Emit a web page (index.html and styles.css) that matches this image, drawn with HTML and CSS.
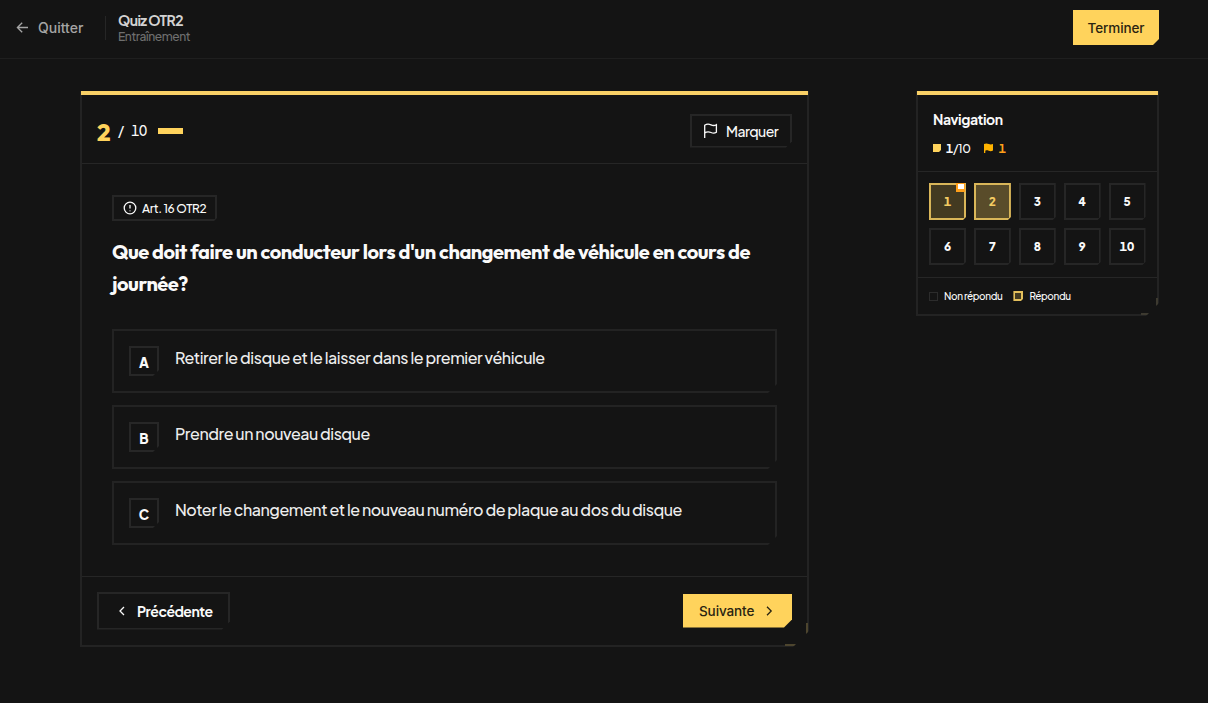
FILE: index.html
```html
<!DOCTYPE html>
<html lang="fr">
<head>
    <meta charset="UTF-8">
    <meta name="viewport" content="width=device-width, initial-scale=1.0">
    <title>Quiz OTR2</title>
    <link rel="stylesheet" href="styles.css">
</head>
<body>

    <header class="topbar">
        <a class="quit" href="#">
            <svg width="13" height="13" viewBox="0 0 13 13"><path d="M12 6.5H1.5M6.2 1.7L1.4 6.5l4.8 4.8"/></svg>
            <span>Quitter</span>
        </a>
        <div class="quiz-info">
            <h1 class="quiz-title"><span>Quiz OTR2</span></h1>
            <p class="quiz-mode"><span>Entraînement</span></p>
        </div>
        <button class="btn-finish"><span>Terminer</span></button>
    </header>

    <main class="layout">
        <section class="card">
            <div class="card-head">
                <span class="current">2</span>
                <span class="slash">/</span>
                <span class="total">10</span>
                <span class="progress"></span>
                <button class="btn-mark">
                    <svg width="15" height="16" viewBox="0 0 15 16"><path d="M1.7 15V2.2C4.5.4 6.500 1.2 8 1.900c2 .9 3.600.9 5.400-.2v7.600c-1.800 1.100-3.400 1.100-5.400.2-1.500-.7-3.500-1.400-6.300.4"/></svg>
                    <span>Marquer</span>
                </button>
            </div>

            <div class="card-body">
                <div class="article">
                    <svg width="14" height="14" viewBox="0 0 14 14"><circle cx="7" cy="7" r="5.8"/><path d="M7 4v3.4M7 9.4v.9"/></svg>
                    <span>Art. 16 OTR2</span>
                </div>
                <h2 class="question">Que doit faire un conducteur lors d'un changement de véhicule en cours de journée?</h2>

                <div class="options">
                    <div class="option">
                        <span class="letter">A</span>
                        <span class="answer">Retirer le disque et le laisser dans le premier véhicule</span>
                    </div>
                    <div class="option">
                        <span class="letter">B</span>
                        <span class="answer">Prendre un nouveau disque</span>
                    </div>
                    <div class="option">
                        <span class="letter">C</span>
                        <span class="answer">Noter le changement et le nouveau numéro de plaque au dos du disque</span>
                    </div>
                </div>
            </div>

            <div class="card-foot">
                <button class="btn-prev">
                    <svg width="8" height="12" viewBox="0 0 8 12"><path d="M6 2L2 6l4 4"/></svg>
                    <span>Précédente</span>
                </button>
                <button class="btn-next">
                    <span>Suivante</span>
                    <svg width="8" height="12" viewBox="0 0 8 12"><path d="M2 1.7L6.2 6 2 10.3"/></svg>
                </button>
            </div>
        </section>

        <aside class="nav-card">
            <div class="nav-head">
                <h3 class="nav-title"><span>Navigation</span></h3>
                <div class="stats">
                    <span class="dot"></span>
                    <span class="answered"><b>1</b>/10</span>
                    <svg class="flag" width="11" height="11" viewBox="0 0 11 11"><path d="M1 1c2-1 3.300-.6 4.800 0 1.400.6 2.700.6 4.200 0v6.600c-1.500.8-2.900.8-4.300.2-1.400-.6-2.300-.6-3.400 0V10H1z"/></svg>
                    <span class="flagged">1</span>
                </div>
            </div>

            <div class="grid">
                <button class="num done">1<i class="marker"></i></button>
                <button class="num done active">2</button>
                <button class="num">3</button>
                <button class="num">4</button>
                <button class="num">5</button>
                <button class="num">6</button>
                <button class="num">7</button>
                <button class="num">8</button>
                <button class="num">9</button>
                <button class="num">10</button>
            </div>

            <div class="legend">
                <span class="box"></span>
                <span class="label">Non répondu</span>
                <span class="box box-done"></span>
                <span class="label">Répondu</span>
            </div>
        </aside>
    </main>

</body>
</html>
```

FILE: styles.css
```css
* {
    box-sizing: border-box;
}

body {
    margin: 0;
    height: 703px;
    overflow: hidden;
    background-color: #141414;
    color: #fafafa;
    font-family: "Plus Jakarta Sans", Inter, sans-serif;
}

h1, h2, h3, p {
    margin: 0;
}

button {
    font-family: inherit;
    color: inherit;
    background: none;
    padding: 0;
    border: none;
    display: flex;
    align-items: center;
    cursor: pointer;
}

svg {
    display: block;
    flex: none;
    fill: none;
    stroke: currentColor;
    stroke-width: 1.3;
}

span {
    white-space: nowrap;
}

/* Top bar */
.topbar {
    height: 59px;
    border-bottom: 1px solid #1f1f1f;
    display: flex;
    align-items: center;
    padding: 0 49px 3px 16px;
}

.quit {
    display: flex;
    align-items: center;
    gap: 9px;
    width: 90px;
    height: 24px;
    border-right: 1px solid #262626;
    color: #a5a5a5;
    font-family: Inter, sans-serif;
    font-size: 14px;
    font-weight: 500;
    text-decoration: none;
}

.quiz-info {
    padding-left: 12px;
}

.quiz-title {
    font-size: 14px;
    line-height: 17px;
    font-weight: 700;
    letter-spacing: -0.6px;
    color: #d2d2d2;
}

.quiz-mode {
    font-size: 12px;
    line-height: 15px;
    font-weight: 500;
    letter-spacing: -0.4px;
    color: #6f6f6f;
}

.btn-finish {
    margin-left: auto;
    width: 86px;
    height: 35px;
    justify-content: center;
    background-color: #ffd35c;
    color: #2a2411;
    font-family: Inter, sans-serif;
    font-size: 13.5px;
    font-weight: 500;
    letter-spacing: -0.1px;
    clip-path: polygon(0 0, 100% 0, 100% calc(100% - 6px), calc(100% - 6px) 100%, 0 100%);
}

/* Columns */
.layout {
    display: flex;
    align-items: flex-start;
    justify-content: space-between;
    padding: 32px 49px 0 80px;
}

.card,
.nav-card {
    position: relative;
    border: 2px solid #232323;
    border-top: none;
    padding-top: 4px;
}

.card::before,
.nav-card::before {
    content: "";
    position: absolute;
    top: 0;
    left: -1px;
    right: -1px;
    height: 4px;
    background-color: #f9d066;
}

/* accent where the border meets the cut corner */
.card::after,
.nav-card::after {
    content: "";
    position: absolute;
    right: -1px;
    bottom: -1px;
    width: 21px;
    height: 21px;
    border: 2px solid #4d452e;
    border-top: none;
    border-left: none;
}

.nav-card::after {
    width: 15px;
    height: 15px;
    border-color: #3d3a30;
}

.card {
    width: 729px;
    clip-path: polygon(0 0, 100% 0, 100% calc(100% - 16px), calc(100% - 16px) 100%, 0 100%);
}

.nav-card {
    width: 243px;
    clip-path: polygon(0 0, 100% 0, 100% calc(100% - 13px), calc(100% - 13px) 100%, 0 100%);
}

/* Question card */
.card-head {
    height: 69px;
    padding: 5px 15px 0;
    border-bottom: 1px solid #262626;
    display: flex;
    align-items: center;
}

.current {
    width: 21px;
    font-family: Outfit, Lato, sans-serif;
    font-size: 23.5px;
    font-weight: 800;
    color: #ffd35c;
}

.slash,
.total {
    font-size: 13.5px;
    line-height: 18px;
    margin-top: -1px;
    font-weight: 500;
    font-variant-numeric: tabular-nums;
}

.total {
    width: 16px;
    margin-left: 7px;
    margin-right: 11px;
    letter-spacing: -0.3px;
}

.progress {
    width: 25px;
    height: 6px;
    margin-top: -1px;
    background-color: #ffd35c;
}

.btn-mark {
    margin-left: auto;
    margin-top: -2px;
    width: 102px;
    height: 34px;
    padding-left: 11px;
    gap: 8px;
    border: 2px solid #262626;
    font-size: 14px;
    font-weight: 500;
    letter-spacing: -0.55px;
    clip-path: polygon(0 0, 100% 0, 100% calc(100% - 6px), calc(100% - 6px) 100%, 0 100%);
}

.card-body {
    height: 412px;
    padding: 31px 30px 0;
}

.article {
    width: 105px;
    height: 26px;
    padding-left: 9px;
    border: 2px solid #262626;
    display: flex;
    align-items: center;
    gap: 5px;
    font-size: 12px;
    font-weight: 500;
    letter-spacing: -0.3px;
    clip-path: polygon(0 0, 100% 0, 100% calc(100% - 3px), calc(100% - 3px) 100%, 0 100%);
}

.question {
    margin: 15px 0 29px;
    font-family: Outfit, Lato, sans-serif;
    font-size: 20px;
    line-height: 32px;
    font-weight: 700;
    letter-spacing: -0.46px;
}

.options {
    display: flex;
    flex-direction: column;
    gap: 12px;
}

.option {
    height: 64px;
    width: 665px;
    padding: 15px;
    border: 2px solid #232323;
    display: flex;
    align-items: flex-start;
    gap: 16px;
    clip-path: polygon(0 0, 100% 0, 100% calc(100% - 9px), calc(100% - 9px) 100%, 0 100%);
}

.letter {
    width: 30px;
    height: 30px;
    border: 2px solid #272727;
    line-height: 29px;
    text-align: center;
    font-size: 13.5px;
    font-weight: 800;
    clip-path: polygon(0 0, 100% 0, 100% calc(100% - 6px), calc(100% - 6px) 100%, 0 100%);
}

.answer {
    font-size: 16px;
    line-height: 24px;
    font-weight: 500;
    letter-spacing: -0.45px;
    color: #ededed;
}

.card-foot {
    height: 69px;
    border-top: 1px solid #262626;
    padding: 0 15px 1px;
    display: flex;
    align-items: center;
    justify-content: space-between;
}

.btn-prev {
    width: 133px;
    height: 38px;
    padding-left: 19px;
    gap: 11px;
    border: 2px solid #262626;
    font-size: 14px;
    font-weight: 700;
    letter-spacing: -0.5px;
    clip-path: polygon(0 0, 100% 0, 100% calc(100% - 8px), calc(100% - 8px) 100%, 0 100%);
}

.btn-next {
    width: 109px;
    height: 34px;
    padding-left: 16px;
    gap: 11px;
    background-color: #ffd35c;
    color: #2a2411;
    font-family: Inter, sans-serif;
    font-size: 13.5px;
    font-weight: 500;
    letter-spacing: -0.1px;
    clip-path: polygon(0 0, 100% 0, 100% calc(100% - 8px), calc(100% - 8px) 100%, 0 100%);
}

/* Navigation panel */
.nav-head {
    height: 77px;
    padding: 15px 15px 0;
    border-bottom: 1px solid #262626;
}

.nav-title {
    font-size: 14px;
    line-height: 19px;
    font-weight: 700;
    letter-spacing: -0.4px;
}

.stats {
    display: flex;
    align-items: center;
    height: 20px;
    margin-top: 9px;
    font-size: 12px;
    font-weight: 500;
}

.dot {
    width: 8px;
    height: 8px;
    margin-right: 5px;
    background-color: #ffd35c;
    clip-path: polygon(0 0, 100% 0, 100% 75%, 75% 100%, 0 100%);
}

.answered {
    letter-spacing: -0.3px;
}

.flag {
    margin: 0 5px 0 12px;
    fill: #ffb300;
    stroke: none;
}

.answered b,
.flagged {
    font-weight: 700;
    font-variant-numeric: tabular-nums;
}

.flagged {
    color: #ff9f1a;
}

.grid {
    display: grid;
    grid-template-columns: repeat(5, 37px);
    column-gap: 7.9px;
    row-gap: 8px;
    height: 105px;
    padding: 11px;
    align-content: start;
}

.num {
    position: relative;
    height: 37px;
    justify-content: center;
    border: 2px solid #262626;
    font-size: 12px;
    font-weight: 800;
    font-variant-numeric: tabular-nums;
    clip-path: polygon(0 0, 100% 0, 100% calc(100% - 3px), calc(100% - 3px) 100%, 0 100%);
}

.num.done {
    border-color: #d9b659;
    background-color: #433a21;
    color: #f3cb62;
}

.num.active {
    background-color: #594c2a;
}

.marker {
    position: absolute;
    top: -2px;
    right: -1px;
    width: 9px;
    height: 9px;
    background-color: #ff9f1a;
}

.marker::after {
    content: "";
    position: absolute;
    left: 2px;
    top: 1px;
    width: 6px;
    height: 5px;
    background-color: #fff;
}

.legend {
    height: 37px;
    border-top: 1px solid #262626;
    padding: 0 11px;
    display: flex;
    align-items: center;
    font-size: 10px;
    font-weight: 500;
    letter-spacing: -0.38px;
}

.box {
    width: 9px;
    height: 9px;
    margin-right: 6px;
    border: 1px solid #2c2c2c;
}

.box-done {
    margin-left: 11px;
    width: 10px;
    height: 10px;
    border: 2px solid #e3bf5c;
    background-color: #433a21;
    clip-path: polygon(0 0, 100% 0, 100% 75%, 75% 100%, 0 100%);
}
```
